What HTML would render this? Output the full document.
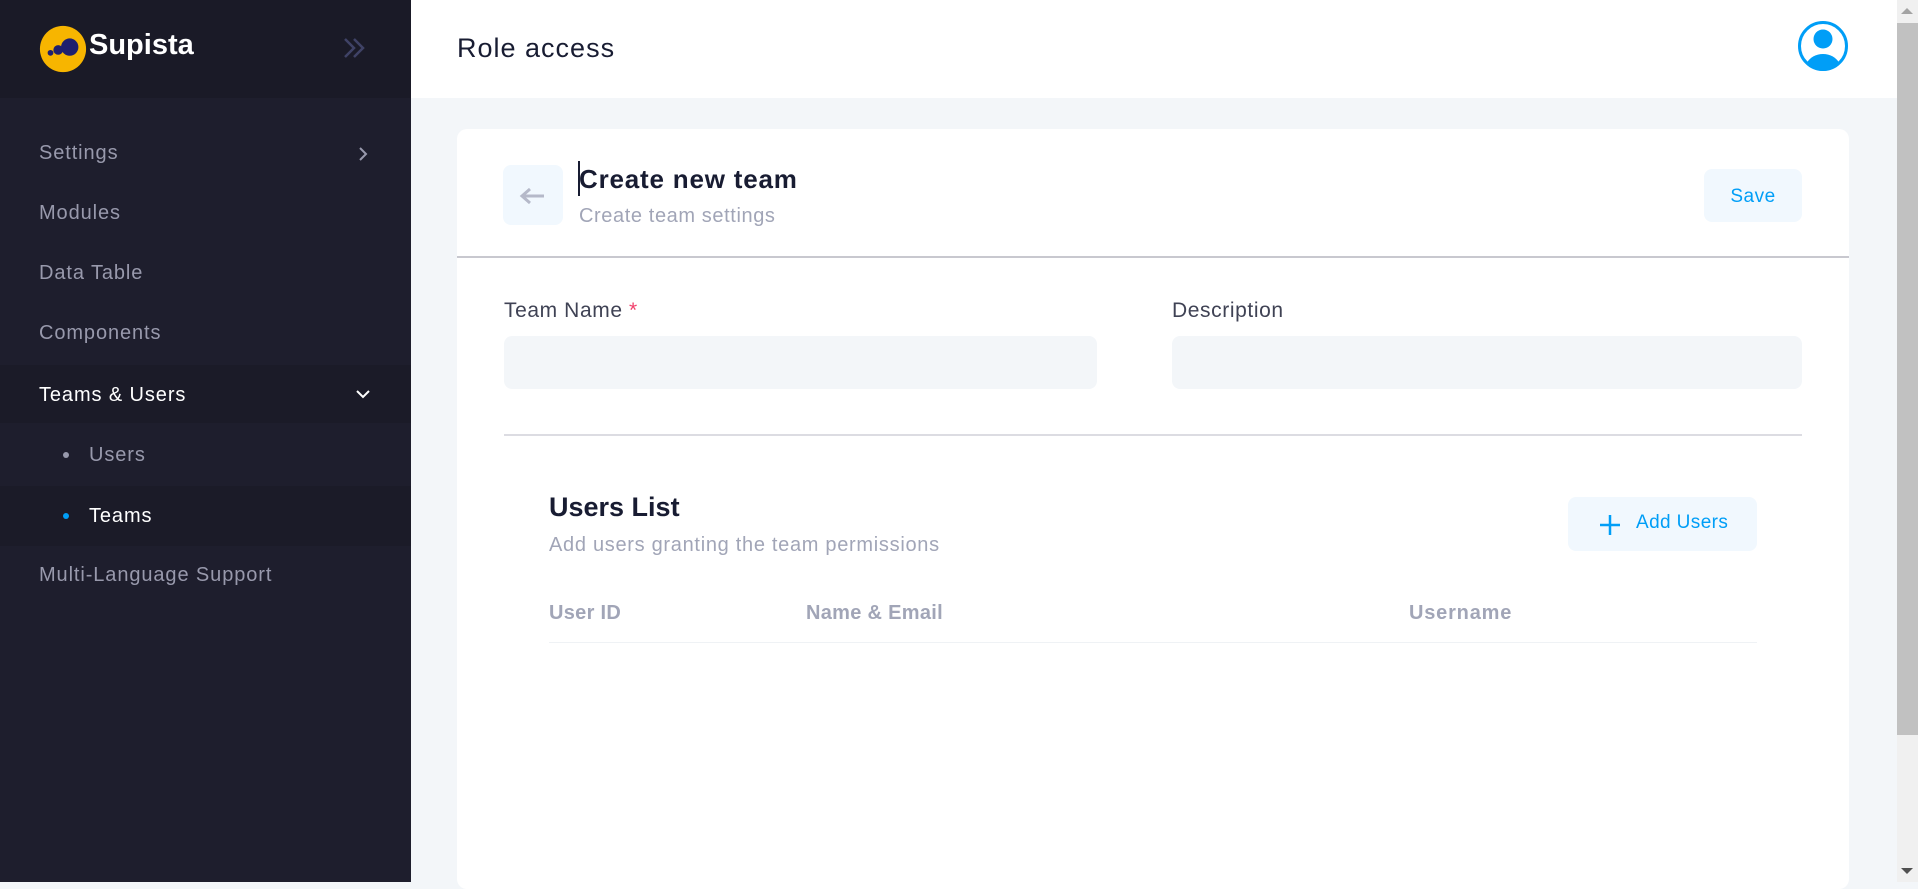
<!DOCTYPE html>
<html><head><meta charset="utf-8"><style>
*{margin:0;padding:0;box-sizing:border-box}
body{width:1918px;height:882px;overflow:hidden;font-family:"Liberation Sans",sans-serif;background:#f3f6f9;position:relative}
.sb{position:absolute;left:0;top:0;width:411px;height:882px;background:#1e1e2d}
.sbtop{position:absolute;left:0;top:0;width:411px;height:98px;background:#1a1a27}
.mi{position:absolute;left:39px;font-size:20px;color:#9899ac;letter-spacing:0.9px}
.band{position:absolute;left:0;width:411px;background:#1b1b28}
.hdr{position:absolute;left:411px;top:0;width:1486px;height:98px;background:#fff}
.card{position:absolute;left:457px;top:129px;width:1392px;height:760px;background:#fff;border-radius:10px}
.abs{position:absolute}
.inp{position:absolute;height:53px;background:#f3f6f9;border-radius:8px}
.lbl{position:absolute;font-size:21px;color:#3f4254;letter-spacing:0.6px}
.th{position:absolute;top:602px;font-size:20px;font-weight:bold;color:#a1a5b7;letter-spacing:0.3px}
</style></head><body>
<div class="sb"></div><div class="sbtop"></div>
<svg class="abs" style="left:38px;top:24px" width="50" height="50" viewBox="0 0 52 52"><circle cx="26" cy="26" r="24" fill="#f7b500"/><circle cx="33" cy="24" r="9" fill="#1f1f6e"/><circle cx="21" cy="27" r="5" fill="#1f1f6e"/><circle cx="13" cy="30" r="3" fill="#1f1f6e"/></svg>
<div class="abs" style="left:89px;top:29px;font-size:29px;font-weight:bold;color:#fff">Supista</div>
<svg class="abs" style="left:342px;top:36px" width="26" height="24" viewBox="0 0 26 24"><path d="M3 3l9 9-9 9M12 3l9 9-9 9" stroke="#3f4266" stroke-width="2.5" fill="none"/></svg>
<div class="band" style="top:365px;height:58px"></div>
<div class="band" style="top:486px;height:60px"></div>
<div class="mi" style="top:142px">Settings</div>
<svg class="abs" style="left:356px;top:145px" width="14" height="18"><path d="M4 3l6 6-6 6" stroke="#9899ac" stroke-width="2" fill="none"/></svg>
<div class="mi" style="top:202px">Modules</div>
<div class="mi" style="top:262px">Data Table</div>
<div class="mi" style="top:322px">Components</div>
<div class="mi" style="top:384px;color:#fff">Teams &amp; Users</div>
<svg class="abs" style="left:354px;top:387px" width="18" height="14"><path d="M3 4l6 6 6-6" stroke="#fff" stroke-width="2" fill="none"/></svg>
<div class="abs" style="left:63px;top:452px;width:6px;height:6px;border-radius:50%;background:#9899ac"></div>
<div class="mi" style="left:89px;top:444px">Users</div>
<div class="abs" style="left:63px;top:513px;width:6px;height:6px;border-radius:50%;background:#009ef7"></div>
<div class="mi" style="left:89px;top:505px;color:#fff">Teams</div>
<div class="mi" style="top:564px">Multi-Language Support</div>
<div class="hdr"></div>
<div class="abs" style="left:457px;top:33px;font-size:27px;color:#181c32;letter-spacing:1px">Role access</div>
<svg class="abs" style="left:1797px;top:20px" width="52" height="52" viewBox="0 0 52 52"><circle cx="26" cy="26" r="23.5" stroke="#009ef7" stroke-width="3" fill="#fff"/><circle cx="26" cy="19" r="9.5" fill="#009ef7"/><path d="M9 44c4-7 10-10 17-10s13 3 17 10c-5 5-11 7-17 7s-12-2-17-7z" fill="#009ef7"/></svg>
<div class="abs" style="left:1897px;top:0;width:21px;height:882px;background:#f0f0f0"></div>
<div class="abs" style="left:1897px;top:23px;width:21px;height:712px;background:#c1c1c1"></div>
<svg class="abs" style="left:1900px;top:6px" width="14" height="10"><path d="M1 8l6-6 6 6z" fill="#a3a3a3"/></svg>
<svg class="abs" style="left:1900px;top:866px" width="14" height="10"><path d="M1 2l6 6 6-6z" fill="#505050"/></svg>
<div class="card"></div>
<div class="abs" style="left:503px;top:165px;width:60px;height:60px;border-radius:8px;background:#f1f8fe"></div>
<svg class="abs" style="left:518px;top:186px" width="30" height="20"><path d="M4 10h22M12 3l-8 7 8 7" stroke="#b5b9c9" stroke-width="3" fill="none"/></svg>
<div class="abs" style="left:578px;top:161px;width:2px;height:35px;background:#181c32"></div>
<div class="abs" style="left:579px;top:164px;font-size:26px;font-weight:bold;color:#181c32;letter-spacing:0.8px">Create new team</div>
<div class="abs" style="left:579px;top:205px;font-size:20px;color:#a1a5b7;letter-spacing:0.6px">Create team settings</div>
<div class="abs" style="left:1704px;top:169px;width:98px;height:53px;border-radius:8px;background:#f1f8fe;color:#009ef7;font-size:19px;text-align:center;line-height:55px;letter-spacing:0.5px">Save</div>
<div class="abs" style="left:457px;top:256px;width:1392px;height:2px;background:#c8c8cf"></div>
<div class="lbl" style="left:504px;top:299px">Team Name <span style="color:#f1416c">*</span></div>
<div class="lbl" style="left:1172px;top:299px">Description</div>
<div class="inp" style="left:504px;top:336px;width:593px"></div>
<div class="inp" style="left:1172px;top:336px;width:630px"></div>
<div class="abs" style="left:504px;top:434px;width:1298px;height:2px;background:#dcdce2"></div>
<div class="abs" style="left:549px;top:492px;font-size:27px;font-weight:bold;color:#181c32">Users List</div>
<div class="abs" style="left:549px;top:534px;font-size:20px;color:#a1a5b7;letter-spacing:0.7px">Add users granting the team permissions</div>
<div class="abs" style="left:1568px;top:497px;width:189px;height:54px;border-radius:8px;background:#f1f8fe;color:#009ef7;font-size:19px;line-height:52px;padding-left:68px;letter-spacing:0.4px">Add Users</div>
<svg class="abs" style="left:1598px;top:513px" width="24" height="24"><path d="M12 2v20M2 12h20" stroke="#009ef7" stroke-width="2.5"/></svg>
<div class="th" style="left:549px">User ID</div>
<div class="th" style="left:806px">Name &amp; Email</div>
<div class="th" style="left:1409px;letter-spacing:0.8px">Username</div>
<div class="abs" style="left:549px;top:642px;width:1208px;height:1px;background:#eff2f5"></div>
</body></html>
